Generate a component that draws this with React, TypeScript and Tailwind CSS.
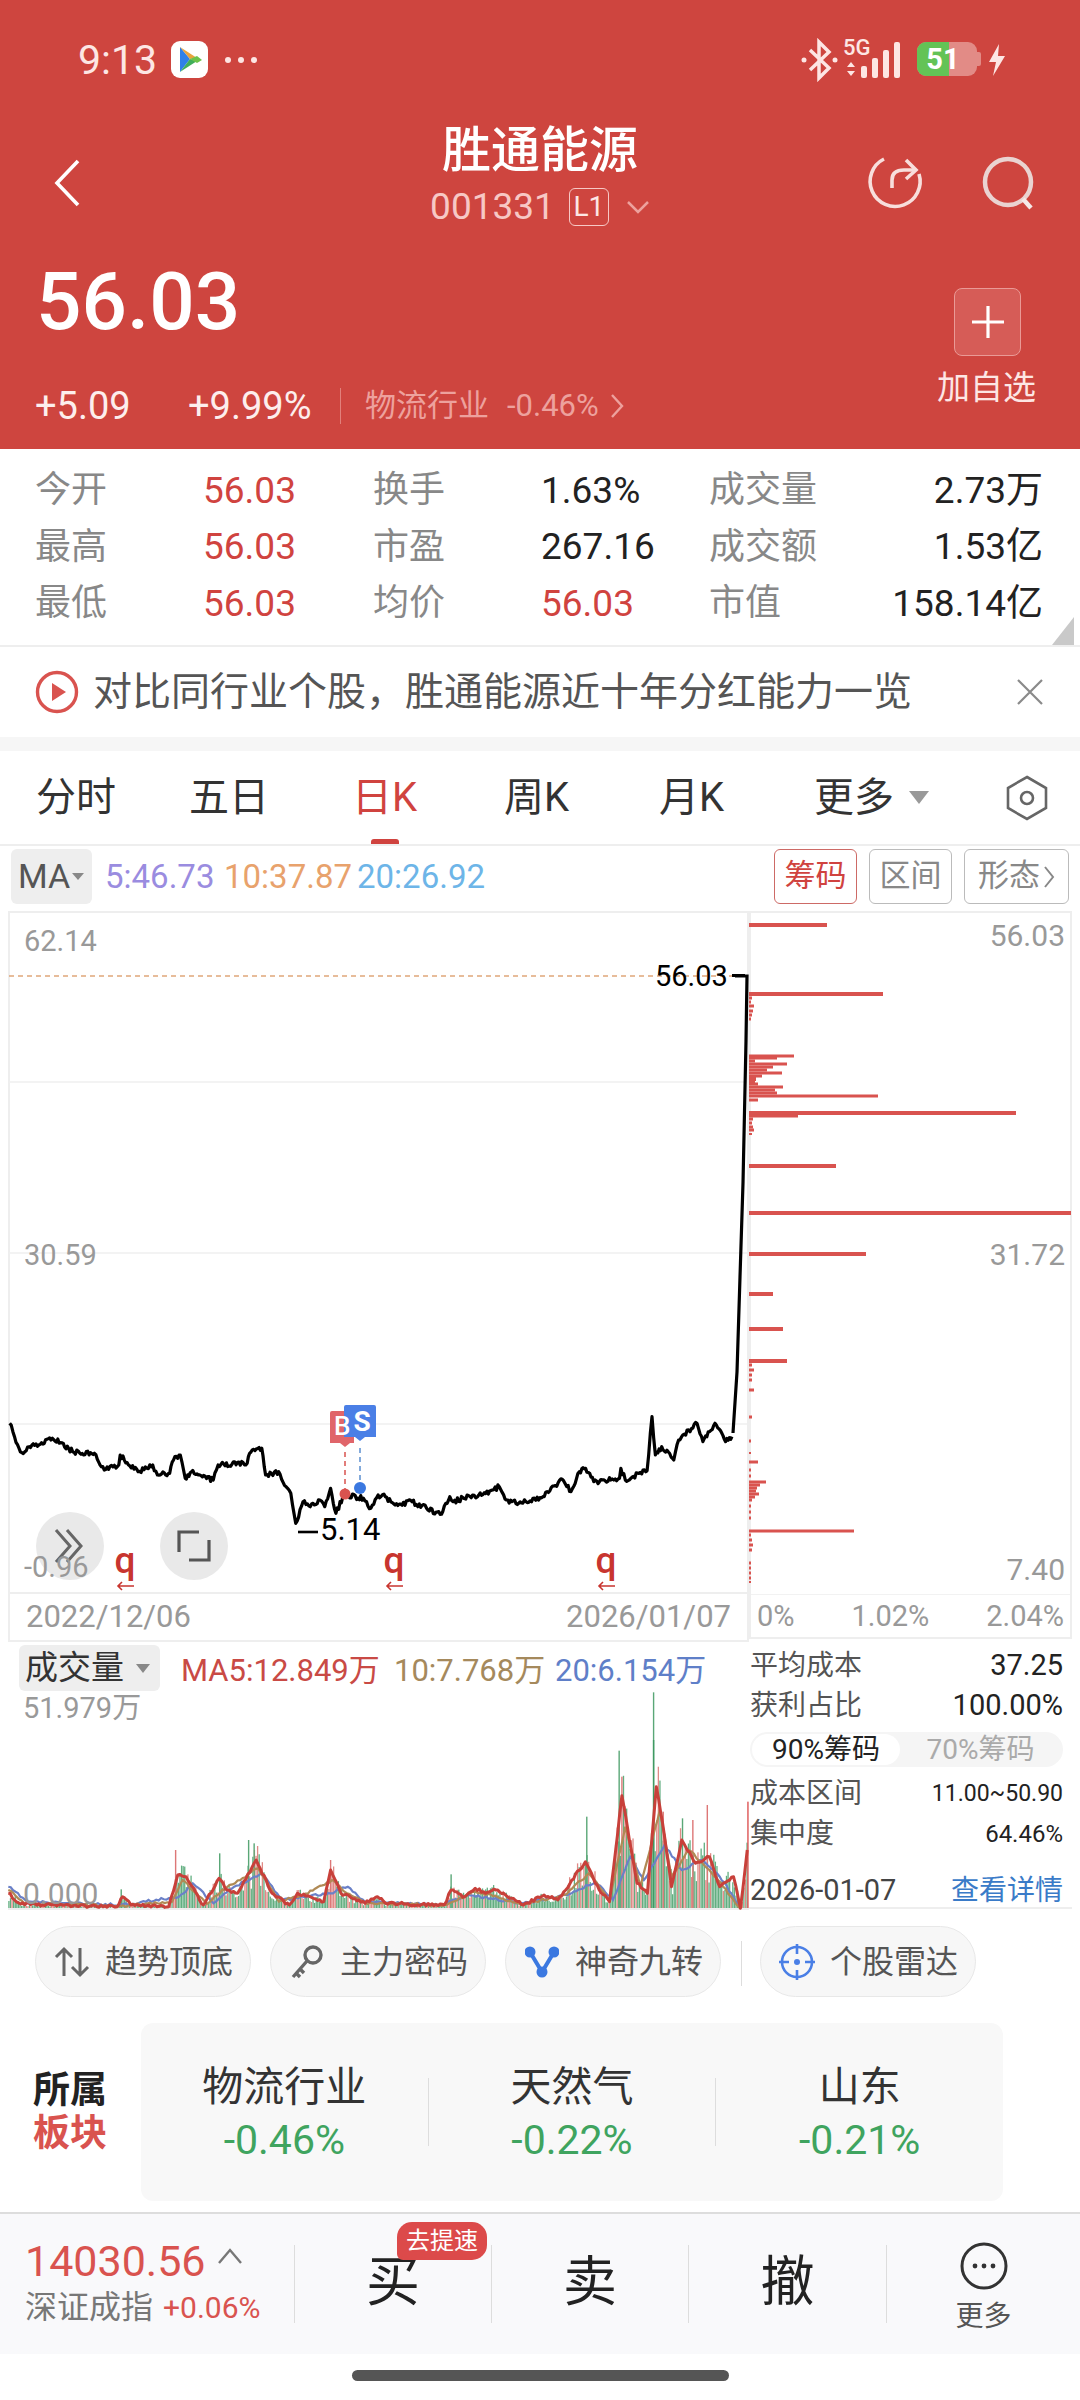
const FONT = '[font-family:Roboto,"Noto_Sans_CJK_SC",sans-serif]';

// small seeded random so the chart noise stays the same on every run
function makeRandom(seed: number) {
  let s = seed;
  return () => {
    s = (s * 16807) % 2147483647;
    return s / 2147483647;
  };
}

type Pt = [number, number];

function jagged(points: Pt[], step: number, noise: number, seed: number) {
  const rnd = makeRandom(seed);
  const out: string[] = [];
  for (let i = 0; i < points.length - 1; i++) {
    const [x0, y0] = points[i];
    const [x1, y1] = points[i + 1];
    const n = Math.max(1, Math.round((x1 - x0) / step));
    for (let j = 0; j < n; j++) {
      const t = j / n;
      const jitter = j === 0 ? 0 : (rnd() - 0.5) * noise;
      out.push(`${(x0 + (x1 - x0) * t).toFixed(1)},${(y0 + (y1 - y0) * t + jitter).toFixed(1)}`);
    }
  }
  const last = points[points.length - 1];
  out.push(`${last[0]},${last[1]}`);
  return out.join(' ');
}

// traced from the reference at 2.063x horizontally, 3x vertically
const priceTrace: Pt[] = [
  [20, 370], [30, 410], [45, 458], [60, 440], [80, 435], [108, 415], [125, 428], [150, 455], [195, 460], [215, 510],
  [245, 495], [248, 465], [265, 495], [285, 515], [315, 495], [325, 525], [350, 520], [358, 480], [372, 465], [382, 535],
  [395, 515], [440, 540], [450, 495], [510, 490], [515, 460], [540, 445], [548, 525], [575, 515], [590, 560], [600, 580],
  [610, 670], [625, 605], [640, 620], [660, 600], [670, 620], [682, 565], [693, 640], [710, 585], [750, 595], [765, 625],
  [780, 585], [795, 590], [815, 615], [850, 605], [880, 625], [908, 643], [928, 590], [935, 605], [975, 585], [985, 590],
  [1030, 560], [1045, 600], [1070, 610], [1120, 590], [1160, 538], [1178, 575], [1195, 515], [1208, 505], [1225, 545],
  [1278, 535], [1281, 505], [1290, 540], [1335, 512], [1345, 350], [1352, 465], [1365, 440], [1390, 480], [1400, 420],
  [1438, 370], [1450, 425], [1475, 370], [1497, 425], [1510, 410],
];
const pricePoints = jagged(
  priceTrace.map(([x, y]) => [x / 2.063, 1300 + y / 3] as Pt),
  1.4,
  5,
  41,
);

const riseUp = '733,1433 737,1372 740,1277 743,1183 746,1041 747,976 735,976';

const chipBars: [number, number, number][] = [
  [925, 827, 4], [994, 883, 4], [998, 752, 3], [1002, 751, 3], [1006, 754, 3], [1011, 753, 3], [1015, 752, 3], [1019, 751, 3],
  [1056, 794, 3], [1058, 777, 3], [1061, 755, 3], [1064, 787, 3], [1067, 773, 3], [1070, 767, 3], [1073, 782, 3], [1076, 762, 3],
  [1079, 756, 4], [1082, 755, 3], [1084, 758, 3], [1087, 783, 3], [1090, 775, 3], [1093, 777, 3], [1096, 878, 3], [1100, 758, 3],
  [1113, 1016, 4], [1116, 798, 3], [1119, 753, 3], [1123, 752, 3], [1127, 753, 3], [1130, 754, 3], [1134, 752, 2],
  [1166, 836, 4], [1213, 1071, 4], [1254, 866, 4], [1294, 773, 4], [1329, 783, 4], [1361, 787, 4], [1365, 752, 3],
  [1370, 754, 3], [1375, 752, 3], [1380, 752, 3], [1390, 754, 3], [1417, 752, 3], [1441, 751, 3], [1453, 751, 2], [1462, 758, 3],
  [1470, 751, 3], [1476, 751, 3], [1482, 766, 3], [1485, 760, 3], [1488, 757, 3], [1491, 756, 3], [1494, 759, 3], [1497, 755, 3],
  [1500, 752, 3], [1506, 751, 3], [1512, 751, 3], [1518, 751, 3], [1531, 854, 3], [1535, 751, 3], [1540, 752, 3], [1545, 753, 3],
  [1550, 752, 3], [1563, 751, 3], [1568, 751, 3], [1573, 751, 3], [1578, 751, 3], [1582, 751, 2],
];

const toVol = ([x, y]: Pt): Pt => [x / 1.452, 1630 + y / 3];

const volRed: Pt[] = [
  [12, 790], [30, 822], [170, 830], [178, 800], [190, 825], [245, 830], [258, 735], [270, 740], [295, 825], [318, 745], [330, 780],
  [345, 790], [372, 690], [395, 790], [420, 825], [432, 790], [470, 815], [480, 720], [495, 790], [530, 820], [548, 800], [560, 820],
  [645, 825], [655, 780], [675, 800], [690, 775], [705, 790], [720, 780], [760, 825], [790, 795], [810, 810], [850, 695], [870, 780],
  [885, 815], [903, 497], [925, 760], [940, 790], [953, 470], [965, 620], [975, 770], [990, 630], [1010, 700], [1030, 680], [1045, 770],
  [1065, 740], [1075, 835], [1085, 660],
];
const volBlue: Pt[] = [
  [12, 770], [40, 815], [175, 825], [260, 800], [280, 760], [310, 820], [340, 770], [380, 730], [410, 810], [440, 800], [480, 790],
  [505, 770], [530, 815], [640, 825], [680, 795], [760, 820], [830, 790], [865, 755], [890, 810], [915, 680], [935, 750], [965, 645],
  [990, 720], [1020, 690], [1045, 740], [1065, 800], [1075, 835],
];
const volBrown: Pt[] = [
  [12, 780], [35, 820], [175, 828], [250, 815], [265, 750], [300, 822], [330, 770], [375, 715], [405, 815], [440, 795], [482, 750],
  [500, 785], [530, 818], [645, 825], [690, 785], [760, 822], [820, 795], [855, 730], [885, 812], [908, 590], [930, 770], [958, 540],
  [975, 740], [1000, 660], [1030, 720], [1050, 770], [1075, 835],
];

const volSpikes: [number, number, string][] = [
  [948, 187, '#5aa777'], [948, 330, '#3f9a62'], [898, 362, '#5aa777'], [851, 560, '#5aa777'], [254, 660, '#d77'], [360, 630, '#5aa777'],
  [368, 640, '#5aa777'], [318, 670, '#5aa777'], [479, 690, '#d77'], [654, 733, '#5aa777'], [175, 778, '#5aa777'], [1026, 525, '#d77'],
  [1085, 515, '#d55'], [990, 565, '#5aa777'], [1005, 570, '#d77'], [945, 610, '#5aa777'], [902, 440, '#d77'], [962, 545, '#d77'],
];

function volumeBars() {
  const rnd = makeRandom(97);
  const bars: { x: number; top: number; color: string }[] = [];
  for (let x = 12; x < 1085; x += 2.3) {
    let envelope = 830;
    for (let i = 0; i < volRed.length - 1; i++) {
      if (x >= volRed[i][0] && x <= volRed[i + 1][0]) {
        const t = (x - volRed[i][0]) / (volRed[i + 1][0] - volRed[i][0]);
        envelope = volRed[i][1] + (volRed[i + 1][1] - volRed[i][1]) * t;
      }
    }
    const height = (836 - envelope) * (0.5 + rnd() * 0.85);
    bars.push({ x, top: 836 - height, color: rnd() > 0.28 ? '#62ae80' : '#e08a86' });
  }
  return bars;
}
const volBars = volumeBars();

function StatCell({ label, value, red, wide }: { label: string; value: string; red?: boolean; wide?: boolean }) {
  return (
    <div className={`flex items-center ${wide ? 'w-[336px]' : 'w-[338px]'}`}>
      <span className="w-[168px] text-[#888] text-[36px]">{label}</span>
      <span className={`text-[37px] ${red ? 'text-[#d0433f]' : 'text-[#222]'}`}>{value}</span>
    </div>
  );
}

function StatRow({ cells }: { cells: [string, string, boolean][] }) {
  return (
    <div className="h-[56.5px] flex items-center">
      <StatCell label={cells[0][0]} value={cells[0][1]} red={cells[0][2]} />
      <StatCell label={cells[1][0]} value={cells[1][1]} red={cells[1][2]} wide />
      <div className="flex-1 flex items-center justify-between">
        <span className="text-[#888] text-[36px]">{cells[2][0]}</span>
        <span className="text-[37px] text-[#222]">{cells[2][1]}</span>
      </div>
    </div>
  );
}

function QMark({ left }: { left: number }) {
  return (
    <div className="absolute top-[631px] flex flex-col items-center w-[24px] text-[#c8352f]" style={{ left }}>
      <span className="text-[37px] leading-[34px] font-medium">q</span>
      <svg className="mt-[3px]" width="18" height="10" viewBox="0 0 18 10" fill="none" stroke="#c8352f" strokeWidth="1.6">
        <path d="M18 5 H2 M6 1 L2 5 L6 9" />
      </svg>
    </div>
  );
}

function ToolChip({ icon, label }: { icon: React.ReactNode; label: string }) {
  return (
    <div className="w-[216px] h-[71px] rounded-full bg-[#f7f7f7] border border-[#e8e8e8] flex items-center pl-[18px] gap-[15px]">
      <span className="w-[36px] h-[36px] flex items-center justify-center">{icon}</span>
      <span className="text-[32px] text-[#555] whitespace-nowrap">{label}</span>
    </div>
  );
}

function Sector({ name, pct }: { name: string; pct: string }) {
  return (
    <div className="flex flex-col items-center w-[288px] pt-[40px]">
      <span className="text-[41px] leading-[48px] text-[#333]">{name}</span>
      <span className="text-[41px] leading-[48px] mt-[5px] text-[#3fa45f]">{pct}</span>
    </div>
  );
}

export default function App() {
  return (
    <div className={`w-[1080px] h-[2400px] bg-white overflow-hidden flex flex-col ${FONT}`}>
      {/* Red header */}
      <header className="h-[449px] bg-[#ce453f] text-white relative shrink-0">
        <div className="absolute left-[78px] top-[36px] text-[41px] leading-[48px] text-[#fde6e4]">9:13</div>
        <div className="absolute left-[171px] top-[41px] w-[37px] h-[37px] rounded-[9px] bg-white flex items-center justify-center">
          <svg width="26" height="30" viewBox="0 0 26 30">
            <path d="M3 2 L13 14 L3 27 Z" fill="#2f80e8" />
            <path d="M3 2 L20 13 L13 14 Z" fill="#e8a33d" />
            <path d="M3 27 L20 16 L13 14 Z" fill="#3fae5a" />
            <path d="M13 14 L20 11 L25 15 L20 18 Z" fill="#6cc24a" />
          </svg>
        </div>
        <div className="absolute left-[225px] top-[57px] flex gap-[7px]">
          <span className="w-[6px] h-[6px] rounded-full bg-[#fde6e4]" />
          <span className="w-[6px] h-[6px] rounded-full bg-[#fde6e4]" />
          <span className="w-[6px] h-[6px] rounded-full bg-[#fde6e4]" />
        </div>

        {/* status icons */}
        <svg className="absolute left-[800px] top-[38px]" width="40" height="44" viewBox="0 0 40 44" fill="none" stroke="#fde6e4" strokeWidth="3.5">
          <path d="M10 12 L29 30 L19 40 V4 L29 14 L10 32" />
          <circle cx="4" cy="22" r="2.5" fill="#fde6e4" stroke="none" />
          <circle cx="35" cy="22" r="2.5" fill="#fde6e4" stroke="none" />
        </svg>
        <span className="absolute left-[843px] top-[35px] text-[22px] leading-[26px] font-medium text-[#fde6e4]">5G</span>
        <svg className="absolute left-[846px] top-[42px]" width="58" height="36" viewBox="0 0 58 36" fill="#fde6e4">
          <path d="M3 20 L7 25 H-1 Z M3 34 L-1 29 H7 Z" transform="translate(2 0)" />
          <rect x="15" y="24" width="6" height="12" rx="2" />
          <rect x="26" y="16" width="6" height="20" rx="2" />
          <rect x="37" y="8" width="6" height="28" rx="2" />
          <rect x="48" y="0" width="6" height="36" rx="2" />
        </svg>
        <div className="absolute left-[917px] top-[42px] w-[60px] h-[34px] rounded-[9px] bg-[#e28b86] overflow-hidden flex">
          <div className="w-[32px] h-full bg-[#63c356]" />
        </div>
        <span className="absolute left-[917px] top-[42px] w-[60px] pr-[8px] text-center text-[29px] leading-[34px] font-bold text-white">51</span>
        <div className="absolute left-[977px] top-[52px] w-[4px] h-[14px] bg-[#e28b86] rounded-r-[2px]" />
        <svg className="absolute left-[988px] top-[44px]" width="18" height="32" viewBox="0 0 18 32" fill="#fde6e4">
          <path d="M11 0 L1 18 H8 L5 32 L17 12 H10 Z" />
        </svg>

        {/* nav */}
        <svg className="absolute left-[52px] top-[158px]" width="30" height="50" viewBox="0 0 30 50" fill="none" stroke="#fff" strokeWidth="3.6">
          <path d="M26 3 L5 25 L26 47" />
        </svg>
        <div className="absolute inset-x-0 top-[122px] flex flex-col items-center">
          <div className="text-[49px] leading-[58px] text-white font-medium">胜通能源</div>
          <div className="flex items-center mt-[7px] h-[40px]">
            <span className="text-[37px] text-[#f7c8c5]">001331</span>
            <span className="ml-[14px] w-[40px] h-[38px] border-[1.5px] border-[#f7c8c5] rounded-[6px] flex items-center justify-center text-[28px] text-[#fde6e4]">
              L1
            </span>
            <svg className="ml-[17px]" width="24" height="14" viewBox="0 0 24 14" fill="none" stroke="#eda19d" strokeWidth="2.5">
              <path d="M2 2 L12 12 L22 2" />
            </svg>
          </div>
        </div>
        <svg className="absolute left-[866px] top-[154px]" width="58" height="58" viewBox="0 0 58 58" fill="none" stroke="#f8dedc" strokeWidth="3.6">
          <path d="M18 5 A25 25 0 1 0 53 20" />
          <path d="M26 34 V26 Q26 16 38 16 H49" />
          <path d="M40 6 L50 16 L40 25" />
        </svg>
        <svg className="absolute left-[981px] top-[155px]" width="56" height="56" viewBox="0 0 56 56" fill="none" stroke="#ead3d1" strokeWidth="4.5">
          <circle cx="27" cy="27" r="23" />
          <path d="M42 44 L50 53" stroke="#f5e9e8" />
        </svg>

        {/* quote */}
        <div className="absolute left-[36px] top-[257px] text-[80px] leading-[90px] font-medium text-white">56.03</div>
        <div className="absolute left-[35px] top-[384px] flex items-center h-[44px]">
          <span className="w-[153px] text-[38px] text-[#fdeeed]">+5.09</span>
          <span className="w-[152px] text-[38px] text-[#fdeeed]">+9.99%</span>
          <span className="w-px h-[36px] bg-[#e2807b]" />
          <span className="ml-[24px] text-[31px] text-[#eda19d]">物流行业</span>
          <span className="ml-[18px] text-[31px] text-[#eda19d]">-0.46%</span>
          <svg className="ml-[11px]" width="14" height="26" viewBox="0 0 14 26" fill="none" stroke="#eda19d" strokeWidth="2.4">
            <path d="M2 2 L12 13 L2 24" />
          </svg>
        </div>
        <div className="absolute left-[954px] top-[288px] w-[67px] h-[68px] rounded-[8px] bg-[#d65c57] border border-[#ea9a96] flex items-center justify-center">
          <svg width="36" height="36" viewBox="0 0 36 36" stroke="#fff" strokeWidth="3.2">
            <path d="M18 2 V34 M2 18 H34" />
          </svg>
        </div>
        <div className="absolute left-[937px] top-[366px] text-[33px] leading-[44px] text-[#fde6e4]">加自选</div>
      </header>

      {/* Quote stats */}
      <section className="h-[198px] shrink-0 relative pl-[35px] pr-[37px] pt-[13px] border-b-2 border-[#eee]">
        <StatRow cells={[['今开', '56.03', true], ['换手', '1.63%', false], ['成交量', '2.73万', false]]} />
        <StatRow cells={[['最高', '56.03', true], ['市盈', '267.16', false], ['成交额', '1.53亿', false]]} />
        <StatRow cells={[['最低', '56.03', true], ['均价', '56.03', true], ['市值', '158.14亿', false]]} />
        <div className="absolute right-[6px] bottom-[0px] w-0 h-0 border-l-[22px] border-l-transparent border-b-[28px] border-b-[#c9c9c9]" />
      </section>

      {/* Promo banner */}
      <section className="h-[90px] shrink-0 flex items-center pl-[35px] pr-[37px]">
        <svg width="44" height="44" viewBox="0 0 44 44" fill="none">
          <circle cx="22" cy="22" r="19.5" stroke="#d9534f" strokeWidth="3.4" />
          <path d="M17 13 L31 22 L17 31 Z" fill="#d9534f" />
        </svg>
        <span className="ml-[14px] text-[39px] text-[#555] whitespace-nowrap">对比同行业个股，胜通能源近十年分红能力一览</span>
        <svg className="ml-auto" width="26" height="26" viewBox="0 0 26 26" stroke="#8a8a8a" strokeWidth="2.2">
          <path d="M1 1 L25 25 M25 1 L1 25" />
        </svg>
      </section>
      <div className="h-[14px] shrink-0 bg-[#f6f6f6]" />

      {/* Period tabs */}
      <nav className="h-[95px] shrink-0 relative flex items-center border-b-2 border-[#eee] text-[40px] text-[#333]">
        <span className="ml-[36px] w-[153px]">分时</span>
        <span className="w-[163px]">五日</span>
        <span className="w-[152px] text-[#d0433f]">日K</span>
        <span className="w-[155px]">周K</span>
        <span className="w-[155px]">月K</span>
        <span>更多</span>
        <span className="ml-[15px] w-0 h-0 border-x-[10px] border-x-transparent border-t-[13px] border-t-[#999]" />
        <svg className="ml-auto mr-[31px]" width="44" height="46" viewBox="0 0 44 46" fill="none" stroke="#666" strokeWidth="2.6">
          <path d="M22 2 L41 13 V33 L22 44 L3 33 V13 Z" />
          <circle cx="22" cy="23" r="6" />
        </svg>
        <span className="absolute left-[371px] bottom-0 w-[28px] h-[5px] rounded-t-[3px] bg-[#d0433f]" />
      </nav>

      {/* MA legend row */}
      <section className="h-[63px] shrink-0 flex items-start pt-[3px] pl-[11px]">
        <div className="w-[81px] h-[55px] rounded-[6px] bg-[#eeeeee] flex items-center pl-[7px]">
          <span className="text-[34px] text-[#555]">MA</span>
          <span className="ml-[2px] w-0 h-0 border-x-[6px] border-x-transparent border-t-[7px] border-t-[#888]" />
        </div>
        <div className="h-[55px] flex items-center text-[33px] whitespace-nowrap">
          <span className="ml-[13px] w-[119px] text-[#9a8ce0]">5:46.73</span>
          <span className="w-[133px] text-[#e8a26c]">10:37.87</span>
          <span className="text-[#6db5e8]">20:26.92</span>
        </div>
        <div className="ml-auto mr-[11px] flex gap-[12px] text-[31px]">
          <span className="w-[83px] h-[55px] rounded-[6px] border border-[#cd6a66] text-[#d0433f] flex items-center justify-center">筹码</span>
          <span className="w-[83px] h-[55px] rounded-[6px] border border-[#bbb] text-[#888] flex items-center justify-center">区间</span>
          <span className="w-[105px] h-[55px] rounded-[6px] border border-[#bbb] text-[#888] flex items-center justify-center gap-[3px]">
            形态
            <svg width="12" height="24" viewBox="0 0 12 24" fill="none" stroke="#888" strokeWidth="2">
              <path d="M2 2 L10 12 L2 22" />
            </svg>
          </span>
        </div>
      </section>

      {/* Charts */}
      <section className="h-[1003px] shrink-0 flex items-start pl-[8px] pt-[2px]">
        <div className="w-[741px] shrink-0">
          {/* Price panel */}
          <div className="h-[683px] relative border-x-2 border-y-2 border-[#eee]">
            <svg className="absolute left-[-2px] top-[-2px]" width="741" height="683" viewBox="8 911 741 683">
              <path d="M9 1082 H747 M9 1253 H747 M9 1424 H747" stroke="#f0f0f0" strokeWidth="1.5" />
              <path d="M9 976 H735" stroke="#e0a679" strokeWidth="1.5" strokeDasharray="5 4" />
              <polyline points={pricePoints} fill="none" stroke="#000" strokeWidth="3.2" strokeLinejoin="round" />
              <polyline points={riseUp} fill="none" stroke="#000" strokeWidth="3.2" />
              <path d="M345 1452 V1490" stroke="#d9534f" strokeWidth="1.5" strokeDasharray="5 4" />
              <path d="M360 1448 V1485" stroke="#5b8fd0" strokeWidth="1.5" strokeDasharray="5 4" />
              <circle cx="345" cy="1494" r="5.5" fill="#d9534f" />
              <circle cx="360" cy="1488" r="6" fill="#3b78e0" />
              <path d="M330 1413 Q330 1411 332 1411 H354 V1443 H350 L345 1447 L340 1443 H330 Z" fill="#e0656a" />
              <path d="M344 1407 Q344 1405 346 1405 H374 Q376 1405 376 1407 V1437 H365 L360 1441 L355 1437 H344 Z" fill="#4a7fe6" />
              <path d="M298 1532 H318" stroke="#000" strokeWidth="2.6" />
              <circle cx="70" cy="1546" r="34" fill="#e9e9e9" />
              <circle cx="194" cy="1546" r="34" fill="#e9e9e9" />
              <path d="M56 1530 L70 1546 L56 1562 M67 1530 L81 1546 L67 1562" fill="none" stroke="#666" strokeWidth="3" />
              <path d="M179 1552 V1532 H199 M209 1540 V1560 H189" fill="none" stroke="#555" strokeWidth="3.2" />
            </svg>
            <span className="absolute left-[14px] top-[11px] text-[29px] leading-[34px] text-[#999]">62.14</span>
            <span className="absolute left-[14px] top-[325px] text-[29px] leading-[34px] text-[#999]">30.59</span>
            <span className="absolute left-[14px] top-[637px] text-[29px] leading-[34px] text-[#999]">-0.96</span>
            <span className="absolute left-[645px] top-[46px] text-[29px] leading-[34px] text-black">56.03</span>
            <span className="absolute left-[722px] top-[61px] w-[13px] h-[2.5px] bg-black" />
            <span className="absolute left-[310px] top-[599px] text-[31px] leading-[36px] text-black">5.14</span>
            <span className="absolute left-[322px] top-[497px] w-[22px] text-left pl-[2px] text-[26px] leading-[32px] font-medium text-white">B</span>
            <span className="absolute left-[336px] top-[493px] w-[32px] text-center text-[28px] leading-[32px] font-bold text-white">S</span>
            <QMark left={103} />
            <QMark left={372} />
            <QMark left={584} />
          </div>

          {/* Date axis */}
          <div className="h-[46px] pl-[16px] pr-[16px] border-x-2 border-[#eee] flex items-center justify-between text-[31px] text-[#999]">
            <span>2022/12/06</span>
            <span>2026/01/07</span>
          </div>

          {/* Volume panel */}
          <div className="h-[270px] relative border-t-2 border-b-2 border-[#eee]">
            <svg className="absolute left-0 top-[-2px]" width="741" height="270" viewBox="8 1640 741 270">
              {volBars.map((b, i) => (
                <rect key={i} x={b.x / 1.452} y={1630 + b.top / 3} width="1.3" height={1908 - (1630 + b.top / 3)} fill={b.color} />
              ))}
              {volSpikes.map(([x, top, color], i) => (
                <rect key={i} x={x / 1.452} y={1630 + top / 3} width="1.4" height={1908 - (1630 + top / 3)} fill={color} />
              ))}
              <polyline points={jagged(volBlue.map(toVol), 2.5, 2.5, 11)} fill="none" stroke="#6a80c8" strokeWidth="2.2" />
              <polyline points={jagged(volBrown.map(toVol), 2.5, 2.5, 23)} fill="none" stroke="#b08a55" strokeWidth="2.2" />
              <polyline points={jagged(volRed.map(toVol), 2, 3, 37)} fill="none" stroke="#c8403a" strokeWidth="3" strokeLinejoin="round" />
            </svg>
            <div className="absolute left-[11px] top-[3px] w-[141px] h-[46px] rounded-[6px] bg-[#eeeeee] flex items-center pl-[6px]">
              <span className="text-[33px] text-[#333]">成交量</span>
              <span className="ml-[12px] w-0 h-0 border-x-[7px] border-x-transparent border-t-[9px] border-t-[#888]" />
            </div>
            <div className="absolute left-[173px] top-[7px] flex text-[31px] leading-[44px] whitespace-nowrap">
              <span className="w-[213px] text-[#c94a45]">MA5:12.849万</span>
              <span className="w-[161px] text-[#a5895c]">10:7.768万</span>
              <span className="text-[#5f7fc8]">20:6.154万</span>
            </div>
            <span className="absolute left-[15px] top-[48px] text-[29px] leading-[36px] text-[#999]">51.979万</span>
            <span className="absolute left-[15px] top-[235px] text-[30px] leading-[34px] text-[#999]">0.000</span>
          </div>
        </div>

        {/* Chip distribution column */}
        <div className="w-[323px] shrink-0">
          <div className="h-[728px] relative border-x-2 border-y-2 border-[#eee]">
            <svg className="absolute left-[-2px] top-[-2px]" width="323" height="684" viewBox="749 911 323 684">
              {chipBars.map(([y, end, h], i) => (
                <rect key={i} x="749" y={y - h / 2} width={end - 749} height={h} fill="#d9534f" />
              ))}
              <path d="M749 1595 H1071" stroke="#eee" strokeWidth="1.5" />
            </svg>
            <span className="absolute right-[5px] top-[6px] text-[30px] leading-[34px] text-[#999]">56.03</span>
            <span className="absolute right-[5px] top-[325px] text-[30px] leading-[34px] text-[#999]">31.72</span>
            <span className="absolute right-[5px] top-[640px] text-[30px] leading-[34px] text-[#999]">7.40</span>
            <div className="absolute left-[6px] right-[6px] top-[684px] h-[40px] flex items-center justify-between text-[29px] text-[#999]">
              <span>0%</span>
              <span>1.02%</span>
              <span>2.04%</span>
            </div>
          </div>

          <div className="h-[270px] pr-[9px] pl-[1px] pt-[7px] border-b-2 border-[#eee] flex flex-col">
            <div className="flex justify-between items-center h-[40px] text-[28px]">
              <span className="text-[#555]">平均成本</span>
              <span className="text-[#222] text-[29px]">37.25</span>
            </div>
            <div className="flex justify-between items-center h-[40px] text-[28px]">
              <span className="text-[#555]">获利占比</span>
              <span className="text-[#222] text-[29px]">100.00%</span>
            </div>
            <div className="mt-[6px] h-[35px] rounded-full bg-[#f5f5f5] flex items-center p-[2px] text-[28px]">
              <span className="w-[148px] h-full rounded-full bg-white text-[#222] flex items-center justify-center">90%筹码</span>
              <span className="flex-1 text-center text-[#aaa]">70%筹码</span>
            </div>
            <div className="mt-[7px] flex justify-between items-center h-[40px] text-[28px]">
              <span className="text-[#555]">成本区间</span>
              <span className="text-[#222] text-[23px]">11.00~50.90</span>
            </div>
            <div className="flex justify-between items-center h-[40px] text-[28px]">
              <span className="text-[#555]">集中度</span>
              <span className="text-[#222] text-[24px]">64.46%</span>
            </div>
            <div className="mt-[17px] flex justify-between items-center h-[40px]">
              <span className="text-[29px] text-[#444]">2026-01-07</span>
              <span className="text-[28px] text-[#3a7bc8]">查看详情</span>
            </div>
          </div>
        </div>
      </section>

      {/* Tool chips */}
      <section className="h-[112px] shrink-0 -mt-[1px] pt-[15px] pl-[35px] flex items-start">
        <div className="flex gap-[19px]">
          <ToolChip
            label="趋势顶底"
            icon={
              <svg width="36" height="32" viewBox="0 0 36 32" fill="none" stroke="#666" strokeWidth="3">
                <path d="M10 30 V3 M2 11 L10 3 L18 11" />
                <path d="M26 2 V29 M18 21 L26 29 L34 21" />
              </svg>
            }
          />
          <ToolChip
            label="主力密码"
            icon={
              <svg width="34" height="36" viewBox="0 0 34 36" fill="none" stroke="#666" strokeWidth="3.4">
                <circle cx="23" cy="11" r="8" />
                <path d="M17 17 L3 33 M6 29 L10 33 M10 25 L14 29" />
              </svg>
            }
          />
          <ToolChip
            label="神奇九转"
            icon={
              <svg width="34" height="32" viewBox="0 0 34 32" fill="none" stroke="#3b78e0" strokeWidth="4">
                <path d="M5 6 L17 26 L29 6" />
                <circle cx="5" cy="6" r="3.5" fill="#3b78e0" />
                <circle cx="29" cy="6" r="3.5" fill="#3b78e0" />
                <circle cx="17" cy="26" r="3.5" fill="#3b78e0" />
              </svg>
            }
          />
        </div>
        <span className="ml-[20px] mr-[18px] mt-[15px] w-px h-[45px] bg-[#ddd]" />
        <ToolChip
          label="个股雷达"
          icon={
            <svg width="36" height="36" viewBox="0 0 36 36" fill="none" stroke="#4a7fe6" strokeWidth="2.6">
              <circle cx="18" cy="18" r="15" />
              <path d="M18 0 V10 M18 26 V36 M0 18 H10 M26 18 H36" />
              <circle cx="18" cy="18" r="3" fill="#4a7fe6" stroke="none" />
            </svg>
          }
        />
      </section>

      {/* Related sectors */}
      <section className="h-[189px] shrink-0 flex items-start">
        <div className="w-[141px] pl-[33px] pt-[46px] text-[37px] leading-[43px] font-bold">
          <div className="text-[#222]">所属</div>
          <div className="text-[#d9534f]">板块</div>
        </div>
        <div className="w-[862px] h-[178px] rounded-[12px] bg-[#f8f8f8] flex items-start">
          <Sector name="物流行业" pct="-0.46%" />
          <span className="mt-[55px] w-px h-[68px] bg-[#ddd]" />
          <Sector name="天然气" pct="-0.22%" />
          <span className="mt-[55px] w-px h-[68px] bg-[#ddd]" />
          <Sector name="山东" pct="-0.21%" />
        </div>
      </section>

      {/* Bottom trade bar */}
      <footer className="h-[142px] shrink-0 border-t-2 border-[#ddd] bg-[#f9f9fb] flex items-start relative">
        <div className="w-[294px] pl-[25px] pt-[24px]">
          <div className="flex items-center h-[46px]">
            <span className="text-[43px] text-[#d9534f]">14030.56</span>
            <svg className="ml-[11px] mb-[10px]" width="26" height="18" viewBox="0 0 26 18" fill="none" stroke="#777" strokeWidth="2.4">
              <path d="M2 16 L13 3 L24 16" />
            </svg>
          </div>
          <div className="flex items-center h-[46px]">
            <span className="text-[32px] text-[#777]">深证成指</span>
            <span className="ml-[10px] text-[30px] text-[#d9534f]">+0.06%</span>
          </div>
        </div>
        <span className="mt-[31px] w-px h-[78px] bg-[#ddd]" />
        <div className="w-[196px] h-[136px] flex items-center justify-center text-[54px] text-[#222]">买</div>
        <span className="mt-[31px] w-px h-[78px] bg-[#ddd]" />
        <div className="w-[196px] h-[136px] flex items-center justify-center text-[54px] text-[#222]">卖</div>
        <span className="mt-[31px] w-px h-[78px] bg-[#ddd]" />
        <div className="w-[197px] h-[136px] flex items-center justify-center text-[54px] text-[#222]">撤</div>
        <span className="mt-[31px] w-px h-[78px] bg-[#ddd]" />
        <div className="flex-1 flex flex-col items-center pt-[28px] pr-[0px]">
          <svg width="48" height="48" viewBox="0 0 48 48" fill="none">
            <circle cx="24" cy="24" r="22" stroke="#333" strokeWidth="3" />
            <circle cx="15" cy="24" r="2.4" fill="#333" />
            <circle cx="24" cy="24" r="2.4" fill="#333" />
            <circle cx="33" cy="24" r="2.4" fill="#333" />
          </svg>
          <span className="text-[28px] leading-[38px] mt-[8px] text-[#555]">更多</span>
        </div>
        <span className="absolute left-[397px] top-[8px] w-[90px] h-[38px] rounded-t-[15px] rounded-br-[15px] rounded-bl-[6px] bg-[#dc4a4a] text-white text-[24px] flex items-center justify-center">
          去提速
        </span>
      </footer>

      {/* Home indicator */}
      <div className="flex-1 flex items-start justify-center pt-[16px]">
        <span className="w-[377px] h-[11px] rounded-full bg-[#555]" />
      </div>
    </div>
  );
}
